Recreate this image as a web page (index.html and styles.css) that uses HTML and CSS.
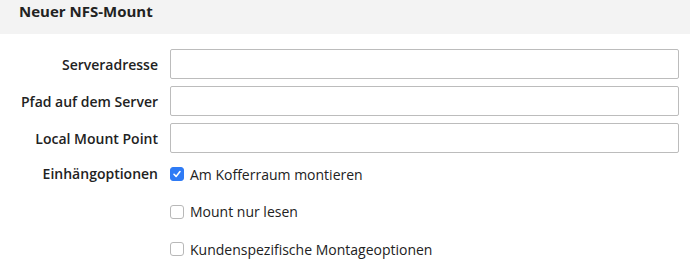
FILE: index.html
```html
<!DOCTYPE html>
<html lang="de">
<head>
    <meta charset="UTF-8">
    <meta name="viewport" content="width=device-width, initial-scale=1.0">
    <title>Neuer NFS-Mount</title>
    <link rel="stylesheet" href="styles.css">
</head>
<body>

    <div class="panel-head">
        <h2 class="panel-title">Neuer NFS-Mount</h2>
    </div>

    <form class="mount-form">
        <label class="field-label" for="server">Serveradresse</label>
        <input class="field-input" type="text" id="server">

        <label class="field-label" for="path">Pfad auf dem Server</label>
        <input class="field-input" type="text" id="path">

        <label class="field-label" for="mountpoint">Local Mount Point</label>
        <input class="field-input" type="text" id="mountpoint">

        <div class="field-label options-label">Einhängoptionen</div>
        <div class="options">
            <label class="option">
                <span class="box checked">
                    <svg width="10" height="10" viewBox="0 0 10 10"><path d="M2 5.3 L4.1 7.4 L8 2.6" fill="none" stroke="#fff" stroke-width="1.6" stroke-linecap="round" stroke-linejoin="round"/></svg>
                </span>
                Am Kofferraum montieren
            </label>
            <label class="option">
                <span class="box"></span>
                Mount nur lesen
            </label>
            <label class="option">
                <span class="box"></span>
                Kundenspezifische Montageoptionen
            </label>
        </div>
    </form>

</body>
</html>
```

FILE: styles.css
```css
body {
    margin: 0;
    font-family: "Open Sans", Arial, sans-serif;
    color: #222;
    background-color: #fff;
}
.panel-head {
    background-color: #f3f3f3;
    height: 34px;
    padding: 0 19px;
}
.panel-title {
    margin: 0;
    font-size: 15px;
    font-weight: 700;
    line-height: 22px;
    color: #222;
}
.mount-form {
    display: grid;
    grid-template-columns: 158px 1fr;
    column-gap: 12px;
    row-gap: 7px;
    padding: 15px 11px 0 0;
    align-items: center;
}
.field-label {
    text-align: right;
    font-size: 14px;
    font-weight: 600;
    color: #222;
}
.field-input {
    height: 30px;
    box-sizing: border-box;
    border: 1px solid #bcbcbc;
    border-radius: 2px;
    margin: 0;
    font: inherit;
}
.options-label {
    align-self: start;
    margin-top: 2px;
    line-height: 24px;
}
.options {
    display: flex;
    flex-direction: column;
    gap: 13.5px;
    margin-top: 2px;
}
.option {
    display: flex;
    align-items: center;
    gap: 6px;
    height: 24px;
    font-size: 14px;
    color: #222;
}
.box {
    width: 14px;
    height: 14px;
    box-sizing: border-box;
    border: 1px solid #b8b8b8;
    border-radius: 3px;
    background-color: #fff;
    display: flex;
    align-items: center;
    justify-content: center;
}
.box.checked {
    background-color: #2f7bf5;
    border-color: #2f7bf5;
}
```
